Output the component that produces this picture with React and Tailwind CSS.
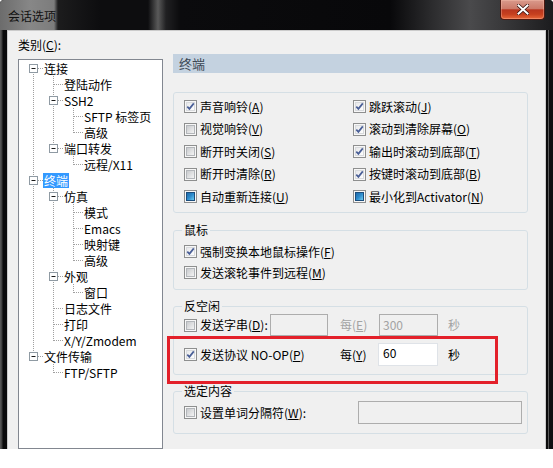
import React from "react";

// Category tree of the session options dialog
const TREE = [
  {
    label: "连接",
    children: [
      { label: "登陆动作" },
      { label: "SSH2", children: [{ label: "SFTP 标签页" }, { label: "高级" }] },
      { label: "端口转发", children: [{ label: "远程/X11" }] },
    ],
  },
  {
    label: "终端",
    selected: true,
    children: [
      {
        label: "仿真",
        children: [{ label: "模式" }, { label: "Emacs" }, { label: "映射键" }, { label: "高级" }],
      },
      { label: "外观", children: [{ label: "窗口" }] },
      { label: "日志文件" },
      { label: "打印" },
      { label: "X/Y/Zmodem" },
    ],
  },
  { label: "文件传输", children: [{ label: "FTP/SFTP" }] },
];

function flatten(nodes, depth = 0, guides = [], out = []) {
  nodes.forEach((n, i) => {
    const isLast = i === nodes.length - 1;
    out.push({
      label: n.label,
      selected: !!n.selected,
      depth,
      guides,
      isLast,
      isFirstRoot: depth === 0 && i === 0,
      hasChildren: !!n.children,
    });
    if (n.children) flatten(n.children, depth + 1, [...guides, !isLast], out);
  });
  return out;
}

const ROWS = flatten(TREE);
const DOT = "#a0a0a0";

function GuideCell({ pass }) {
  return (
    <svg width="20" height="16" viewBox="0 0 20 16" className="block shrink-0">
      {pass && <line x1="10.5" y1="0" x2="10.5" y2="16" stroke={DOT} strokeDasharray="1 1" />}
    </svg>
  );
}

function NodeCell({ row }) {
  const top = row.isFirstRoot ? 8 : 0;
  const bottom = row.isLast ? 9 : 16;
  return (
    <svg width="20" height="16" viewBox="0 0 20 16" className="block shrink-0">
      <line x1="10.5" y1={top} x2="10.5" y2={bottom} stroke={DOT} strokeDasharray="1 1" />
      <line x1="11" y1="8.5" x2="20" y2="8.5" stroke={DOT} strokeDasharray="1 1" />
      {row.hasChildren && (
        <g>
          <rect x="6.5" y="4.5" width="8" height="8" fill="#ffffff" stroke="#8f9aa3" />
          <line x1="8.5" y1="8.5" x2="12.5" y2="8.5" stroke="#1a1a1a" />
        </g>
      )}
    </svg>
  );
}

function Tree() {
  return (
    <div className="mt-[6px] h-[400px] w-[145px] border border-[#828790] bg-white pl-[4px]">
      {ROWS.map((row, i) => (
        <div key={i} className="flex h-[16px] items-center whitespace-nowrap">
          {row.guides.map((g, j) => (
            <GuideCell key={j} pass={g} />
          ))}
          <NodeCell row={row} />
          <span
            className={
              row.selected
                ? "bg-[#3399ff] px-[1px] leading-[15px] text-white"
                : "px-[1px] leading-[15px] text-black"
            }
          >
            {row.label}
          </span>
        </div>
      ))}
    </div>
  );
}

// Windows 7 style check box: "on", "off" or "mixed"
function Check({ state }) {
  return (
    <svg width="13" height="13" viewBox="0 0 13 13" className="block shrink-0">
      <defs>
        <linearGradient id="cb-off" x1="0" y1="0" x2="1" y2="1">
          <stop offset="0" stopColor="#c6c8cb" />
          <stop offset="1" stopColor="#f6f6f6" />
        </linearGradient>
        <linearGradient id="cb-on" x1="0" y1="0" x2="1" y2="1">
          <stop offset="0" stopColor="#e6e7e9" />
          <stop offset="1" stopColor="#ffffff" />
        </linearGradient>
        <linearGradient id="cb-mix" x1="0" y1="0" x2="1" y2="1">
          <stop offset="0" stopColor="#1a64a3" />
          <stop offset="0.5" stopColor="#2e8ccd" />
          <stop offset="1" stopColor="#74d3f3" />
        </linearGradient>
      </defs>
      <rect x="0.5" y="0.5" width="12" height="12" fill="#f7f7f7" stroke="#8e8f8f" />
      {state === "off" && (
        <rect x="2.5" y="2.5" width="8" height="8" fill="url(#cb-off)" stroke="#b3b6ba" />
      )}
      {state === "on" && (
        <g>
          <rect x="2.5" y="2.5" width="8" height="8" fill="url(#cb-on)" stroke="#d8dadd" />
          <path d="M3.3 6.6 L5.4 8.9 L9.8 3.4" fill="none" stroke="#4a5f97" strokeWidth="1.7" />
        </g>
      )}
      {state === "mixed" && (
        <rect x="2.5" y="2.5" width="8" height="8" fill="url(#cb-mix)" stroke="#1b4d7c" />
      )}
    </svg>
  );
}

function Key({ pre, k, post = "" }) {
  return (
    <span className="whitespace-nowrap">
      {pre}(<span className="underline">{k}</span>){post}
    </span>
  );
}

function CheckRow({ state, pre, k, post }) {
  return (
    <div className="flex h-[22.5px] items-center gap-[3px]">
      <Check state={state} />
      <Key pre={pre} k={k} post={post} />
    </div>
  );
}

function CloseButton() {
  return (
    <div className="ml-auto mr-[8px] flex h-[20px] w-[45px] items-center justify-center rounded-b-[4px] border border-t-0 border-[#4e1a12] bg-[linear-gradient(180deg,#d99a8c_0%,#cc7a69_45%,#b9361f_52%,#c6401f_75%,#e8683a_100%)] shadow-[inset_0_0_0_1px_rgba(255,200,180,0.35)]">
      <svg width="12" height="11" viewBox="0 0 12 11" className="block">
        <path d="M1.5 1.5 L10.5 9.5 M10.5 1.5 L1.5 9.5" stroke="#3a1410" strokeWidth="3.6" strokeLinecap="square" />
        <path d="M1.5 1.5 L10.5 9.5 M10.5 1.5 L1.5 9.5" stroke="#ffffff" strokeWidth="2" strokeLinecap="square" />
      </svg>
    </div>
  );
}

export default function App() {
  return (
    <div className="relative h-[468px] w-[553px] overflow-hidden bg-white font-['Noto_Sans_CJK_SC',sans-serif] text-[12px] leading-[16px] text-black">
      <div className="flex h-[449px] flex-col overflow-hidden rounded-t-[4px] bg-[#0b0b0c]">
        {/* title bar */}
        <div className="flex h-[30px] shrink-0 items-start bg-[linear-gradient(90deg,#6c6c6c_0px,#878787_30px,#7c7c7c_54px,#1c1c1d_58px,#0d0d0f_100px,#0d0d0f_148px,#5a5a5a_158px,#202022_166px,#0b0b0d_180px,#08080a_390px,#2a2a2c_430px,#4a4a4c_470px,#3a3a3c_500px,#1c1c1e_553px)]">
          <span className="pl-[8px] pt-[8px] text-[12px] leading-[16px] text-[#111]">会话选项</span>
          <CloseButton />
        </div>

        {/* frame sides + client area */}
        <div className="flex min-h-0 flex-1">
          <div className="w-[7px] shrink-0 bg-[linear-gradient(90deg,#5e5e5e_0px,#3a3a3a_2px,#0b0b0c_3px)]" />
          <div className="flex min-w-0 flex-1 overflow-hidden border border-b-0 border-[#cbcbcb] bg-[#f0f0f0] pl-[10px]">
            {/* category column */}
            <div className="flex w-[145px] shrink-0 flex-col pt-[6px]">
              <Key pre="类别" k="C" post=":" />
              <Tree />
            </div>

            {/* settings column */}
            <div className="ml-[10px] flex w-[357px] shrink-0 flex-col pt-[23px]">
              <div className="flex h-[19px] items-center bg-[#c4d2e0] px-[6px] text-[13px] text-[#3a4652]">终端</div>

              <div className="mr-[2px] mt-[19px] grid grid-cols-[169px_1fr] rounded-[3px] border border-[#d5dfe5] pb-[4px] pl-[10px] pt-[2.5px]">
                <CheckRow state="on" pre="声音响铃" k="A" />
                <CheckRow state="on" pre="跳跃滚动" k="J" />
                <CheckRow state="off" pre="视觉响铃" k="V" />
                <CheckRow state="on" pre="滚动到清除屏幕" k="O" />
                <CheckRow state="off" pre="断开时关闭" k="S" />
                <CheckRow state="on" pre="输出时滚动到底部" k="T" />
                <CheckRow state="off" pre="断开时清除" k="R" />
                <CheckRow state="on" pre="按键时滚动到底部" k="B" />
                <CheckRow state="mixed" pre="自动重新连接" k="U" />
                <CheckRow state="mixed" pre="最小化到Activator" k="N" />
              </div>

              <fieldset className="mr-[2px] mt-[9px] rounded-[3px] border border-[#d5dfe5] pb-[6px] pl-[10px]">
                <legend className="ml-[-2px] px-[2px] leading-[16px]">鼠标</legend>
                <div className="flex flex-col pt-[3px]">
                  <div className="flex h-[21px] items-center gap-[3px]">
                    <Check state="on" />
                    <Key pre="强制变换本地鼠标操作" k="F" />
                  </div>
                  <div className="flex h-[21px] items-center gap-[3px]">
                    <Check state="off" />
                    <Key pre="发送滚轮事件到远程" k="M" />
                  </div>
                </div>
              </fieldset>

              <fieldset className="mr-[2px] mt-[8px] rounded-[3px] border border-[#d5dfe5] pb-[8px] pl-[10px]">
                <legend className="ml-[-2px] px-[2px] leading-[16px]">反空闲</legend>
                <div className="flex h-[22px] items-center">
                  <div className="flex w-[86px] items-center gap-[3px]">
                    <Check state="off" />
                    <Key pre="发送字串" k="D" post=":" />
                  </div>
                  <div className="h-[22px] w-[58px] border border-[#adadad] bg-[#f0f0f0]" />
                  <span className="ml-[12px] w-[39px] text-[#a3a3a3]">
                    <Key pre="每" k="E" />
                  </span>
                  <div className="h-[22px] w-[59px] border border-[#adadad] bg-[#f0f0f0] pl-[3px] pt-[2px] text-[#a3a3a3]">300</div>
                  <span className="ml-[10px] text-[#a3a3a3]">秒</span>
                </div>
                <div className="mt-[7px] flex h-[23px] items-center">
                  <div className="flex w-[156px] items-center gap-[3px]">
                    <Check state="on" />
                    <Key pre="发送协议 NO-OP" k="P" />
                  </div>
                  <span className="w-[38px]">
                    <Key pre="每" k="Y" />
                  </span>
                  <div className="h-[23px] w-[60px] border border-[#dfe3e8] bg-white pl-[4px] pt-[1px]">60</div>
                  <span className="ml-[10px]">秒</span>
                </div>
              </fieldset>

              <fieldset className="mr-[2px] mt-[8px] rounded-[3px] border border-[#d5dfe5] pb-[9px] pl-[10px]">
                <legend className="ml-[-2px] px-[2px] leading-[16px]">选定内容</legend>
                <div className="flex h-[23px] items-center pt-0 mt-[2px]">
                  <div className="flex w-[174px] items-center gap-[3px]">
                    <Check state="off" />
                    <Key pre="设置单词分隔符" k="W" post=":" />
                  </div>
                  <div className="h-[23px] w-[164px] border border-[#adadad] bg-[#f0f0f0]" />
                </div>
              </fieldset>
            </div>
          </div>
          <div className="w-[7px] shrink-0 bg-[linear-gradient(90deg,#0b0b0c_0px,#0b0b0c_2px,#5a5a5a_2px,#5a5a5a_3px,#101012_3px)]" />
        </div>
      </div>

      {/* highlight frame around the keep-alive row */}
      <div className="absolute left-[167px] top-[336px] h-[48px] w-[331px] border-[3px] border-[#e3202a]" />
    </div>
  );
}
